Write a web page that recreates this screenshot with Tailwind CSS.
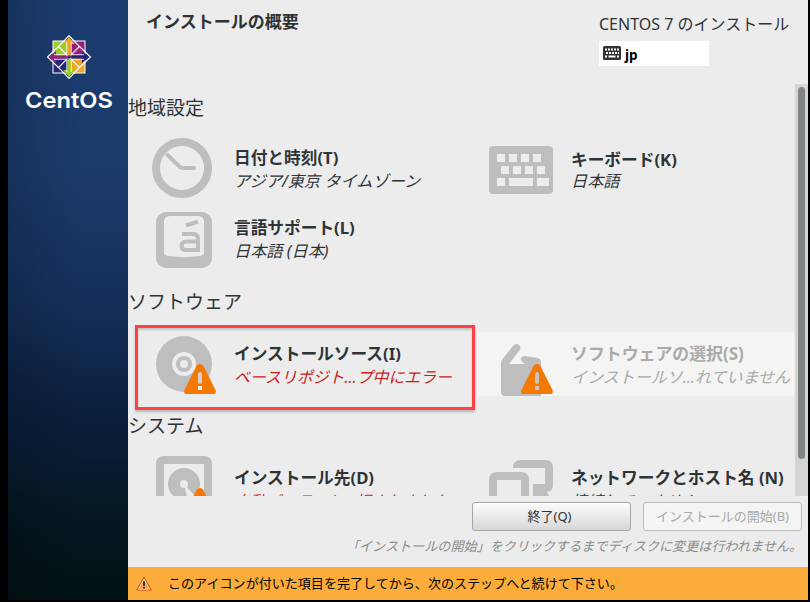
<!DOCTYPE html>
<html lang="ja">
<head>
<meta charset="utf-8">
<title>インストールの概要</title>
<script src="https://cdn.jsdelivr.net/npm/@tailwindcss/browser@4"></script>
</head>
<body class="w-[810px] h-[602px] overflow-hidden bg-black font-['Noto_Sans','Noto_Sans_CJK_JP',sans-serif] text-[#2e3436]">
<svg class="hidden">
  <symbol id="warn" viewBox="0 0 32 30">
    <path d="M16 0c1.500 0 2.700.7 3.400 2L31.500 26c1 2.200.2 4-2.500 4H3c-2.700 0-3.500-1.800-2.500-4L12.600 2C13.300.7 14.500 0 16 0z" fill="#f57900"/>
    <rect x="14" y="8" width="4" height="12" rx="2" fill="var(--top)"/>
    <rect x="14" y="22" width="4" height="4" fill="var(--dot)"/>
  </symbol>
</svg>
<div class="flex w-[800px] h-[600px] ml-2">
  <aside class="w-[120px] shrink-0 pt-[34px] bg-[linear-gradient(90deg,#00000026,transparent_60%),linear-gradient(180deg,#1b3c70_0%,#1b3b6c_28%,#152f5a_50%,#0a1f3c_70%,#04161f_88%,#021315_100%)]">
    <svg class="block ml-[38px]" width="46" height="46" viewBox="0 0 46 46">
      <g stroke="#fff" stroke-width="1">
        <rect x="7" y="7" width="16" height="16" fill="#9ccd2a"/>
        <rect x="23" y="7" width="16" height="16" fill="#932279"/>
        <rect x="7" y="23" width="16" height="16" fill="#262577"/>
        <rect x="23" y="23" width="16" height="16" fill="#efa724"/>
      </g>
      <g stroke="#fff" stroke-width="1.100">
        <path d="M21.500 21.500L12.500 12.500L23 1.500L33.500 12.500L24.500 21.500" fill="none"/>
        <path d="M21.500 24.500L12.500 33.500L23 44.500L33.500 33.500L24.500 24.500" fill="none"/>
        <path d="M12.500 12.500L1.500 23L12.500 33.500M33.500 12.500L44.500 23L33.500 33.500" fill="none"/>
      </g>
      <path d="M21.200 20V10H17L23 3L29 10H24.800V20L23 22Z" fill="#efa724"/>
      <path d="M21.200 26V36H17L23 43L29 36H24.800V26L23 24Z" fill="#9ccd2a"/>
      <path d="M20 21.200H10V17L3 23L10 29V24.800H20L22 23Z" fill="#932279"/>
      <path d="M26 21.200H36V17L43 23L36 29V24.800H26L24 23Z" fill="#262577"/>
      <g fill="none" stroke="#fff" stroke-width=".8"><path d="M20.700 8V20.700H8M25.300 8V20.700H38M20.700 38V25.300H8M25.300 38V25.300H38"/></g>
      <rect x="21.500" y="21.500" width="3" height="3" fill="#262577"/>
    </svg>
    <svg class="block mt-[9px] ml-[14px] overflow-visible" width="94" height="24"><text x="3" y="18.500" font-family="Inter" font-weight="600" font-size="22" textLength="88" lengthAdjust="spacingAndGlyphs" fill="#fff">CentOS</text></svg>
  </aside>
  <main class="flex flex-col w-[680px] bg-[#ececec]">
    <header class="flex justify-between h-[84px] pl-[18px] pr-[17px]">
      <h1 class="mt-[9px] text-[17px] leading-[26px] font-bold">インストールの概要</h1>
      <div class="w-[192px] mt-[12px]">
        <div class="text-[16px] leading-[24px] whitespace-nowrap">CENTOS 7 のインストール</div>
        <div class="flex w-[110px] h-[25px] mt-[5px] pl-1 bg-white text-black">
          <svg class="mt-[5px]" width="18" height="14"><rect width="18" height="14" rx="1.500" fill="#2e3436"/><path d="M2 3.500H16M3 7H16" stroke="#fff" stroke-width="2" stroke-dasharray="2 1"/><path d="M2 10.500H4M5.500 10.500H12.500M14 10.500H16" stroke="#fff" stroke-width="2"/></svg>
          <span class="ml-1 mt-[4px] text-[13.500px] leading-[20px] font-bold">jp</span>
        </div>
      </div>
    </header>
    <div class="flex h-[412px] overflow-hidden">
      <div class="relative w-[667px] h-[440px] shrink-0">
        <h2 class="h-[52px] pt-[10px] text-[19px] leading-[28px]">地域設定</h2>
        <div class="grid grid-cols-[349px_318px] gap-y-2 h-[136px]">
          <div class="flex h-16 pl-6">
            <svg width="64" height="64" class="shrink-0"><circle cx="30" cy="32" r="26" fill="none" stroke="#bebebe" stroke-width="8"/><path d="M15.500 19L27.500 30.500Q29 32 31 32H42" fill="none" stroke="#bebebe" stroke-width="4" stroke-linecap="round" stroke-linejoin="round"/></svg>
            <div class="ml-[18px] pt-[10px] whitespace-nowrap"><div class="text-[16.700px] leading-[24px] font-bold">日付と時刻(T)</div><div class="text-[16.200px] leading-[23px] italic">アジア/東京 タイムゾーン</div></div>
          </div>
          <div class="flex h-16 pl-3">
            <svg width="64" height="64" class="shrink-0"><rect y="10" width="64" height="48" rx="4" fill="#bebebe"/><g fill="#ececec"><path d="M8 18h8v8H8zM20 18h8v8h-8zM32 18h8v8h-8zM44 18h8v8h-8zM12 30h8v8h-8zM24 30h8v8h-8zM36 30h8v8h-8zM48 30h8v8h-8zM8 42h8v8H8zM20 42h24v8H20zM48 42h12v8H48z"/></g></svg>
            <div class="ml-[18px] pt-[12px] whitespace-nowrap"><div class="text-[16.700px] leading-[24px] font-bold">キーボード(K)</div><div class="-mt-0.5 text-[16.200px] leading-[23px] italic">日本語</div></div>
          </div>
          <div class="flex h-16 pl-6">
            <svg width="64" height="64" class="shrink-0"><rect x="4" y="4" width="56" height="56" rx="10" fill="#bebebe"/><path d="M18 8H46Q52 8 52 14V44Q52 48 47 48Q32 50 17 48Q12 48 12 44V14Q12 8 18 8Z" fill="#ececec"/><path d="M34 17.500L46 13.500" stroke="#bebebe" stroke-width="4"/><path d="M30 26H41Q46 26 46 31V42H34Q29.500 42 29.500 38T34 33.500H46" fill="none" stroke="#bebebe" stroke-width="4"/></svg>
            <div class="ml-[18px] pt-[8px] whitespace-nowrap"><div class="text-[16.700px] leading-[24px] font-bold">言語サポート(L)</div><div class="text-[16.200px] leading-[23px] italic">日本語 (日本)</div></div>
          </div>
        </div>
        <h2 class="h-[60px] pt-[16px] text-[19px] leading-[28px]">ソフトウェア</h2>
        <div class="grid grid-cols-[349px_318px] h-16">
          <div class="flex pl-6">
            <svg width="64" height="64" class="shrink-0 [--top:#d0d0cf] [--dot:#ececec]"><circle cx="32" cy="32" r="28" fill="#bebebe"/><circle cx="32" cy="32" r="10" fill="none" stroke="#ececec" stroke-width="4"/><circle cx="32" cy="32" r="4" fill="#ececec"/><use href="#warn" x="32" y="32" width="32" height="30"/></svg>
            <div class="ml-[18px] pt-[10px] whitespace-nowrap"><div class="text-[16.700px] leading-[24px] font-bold">インストールソース(I)</div><div class="text-[15.900px] leading-[23px] italic text-[#cc1a1a]">ベースリポジト...プ中にエラー</div></div>
          </div>
          <div class="flex pl-3 bg-[#f4f4f2] text-[#a9abaa]">
            <svg width="64" height="64" class="shrink-0 [--top:#c6c6c6] [--dot:#c6c6c6]"><path d="M12 31Q12 29 13.500 27L24 14Q27 10.500 30 13Q33 15.500 30 19L20 32H36Q31 29 32 26Q33 24 36 24L49 26Q52 27 52 30V64H16Q12 64 12 60Z" fill="#bebebe"/><use href="#warn" x="32" y="32" width="32" height="30"/></svg>
            <div class="ml-[18px] pt-[10px] whitespace-nowrap"><div class="text-[16.900px] leading-[24px] font-bold">ソフトウェアの選択(S)</div><div class="text-[16px] leading-[23px] italic">インストールソ...れていません</div></div>
          </div>
        </div>
        <h2 class="h-[56px] pt-[16px] text-[19px] leading-[28px]">システム</h2>
        <div class="grid grid-cols-[349px_318px] h-16">
          <div class="flex pl-6">
            <svg width="64" height="64" class="shrink-0 [--top:#d0d0cf] [--dot:#ececec]"><path d="M12 4H52Q60 4 60 12V64H4V12Q4 4 12 4ZM12 12V56H52V12Z" fill="#bebebe" fill-rule="evenodd"/><circle cx="32" cy="32" r="16" fill="#bebebe"/><path d="M32 32L35 45H44Z" fill="#ececec"/><circle cx="32" cy="32" r="4" fill="#ececec"/><use href="#warn" x="32" y="36" width="32" height="30"/></svg>
            <div class="ml-[18px] pt-[14px] whitespace-nowrap"><div class="text-[16.700px] leading-[24px] font-bold">インストール先(D)</div><div class="text-[15.700px] leading-[23px] italic text-[#cc1a1a]">自動パーティシ...択されました</div></div>
          </div>
          <div class="flex pl-3">
            <svg width="64" height="64" class="shrink-0" fill="#bebebe"><path d="M24 16Q24 8 32 8H56Q64 8 64 16V33Q64 39 58 40L60 44H44V32H56V16Z"/><path d="M0 64V28Q0 20 8 20H32Q40 20 40 28V64H32V28H8V64Z"/></svg>
            <div class="ml-[18px] pt-[14px] whitespace-nowrap"><div class="text-[16.700px] leading-[24px] font-bold">ネットワークとホスト名 (N)</div><div class="text-[15.900px] leading-[23px] italic">接続していません</div></div>
          </div>
        </div>
        <div class="absolute left-[7px] top-[241px] w-[340px] h-[85px] border-3 border-[#fc4242] shadow-[0_2px_2px_#8888,inset_0_2px_2px_#8886]"></div>
      </div>
      <div class="w-[13px] pt-[3px] pl-[3px] bg-[#d3d4d4]"><div class="w-[7px] h-[372px] rounded-full bg-[#808584]"></div></div>
    </div>
    <footer class="h-[71px] shrink-0 pt-[6px]">
      <div class="flex justify-end gap-3 pr-[6px]">
        <button class="w-[159px] h-[29px] rounded-[3px] border border-[#a5a5a2] bg-linear-to-b from-[#fcfcfc] to-[#d7d7d7] pr-1 text-[13px]">終了(Q)</button>
        <button class="w-[159px] h-[29px] rounded-[3px] border border-[#bcbdb9] bg-[#f4f4f2] text-[13px] text-[#a8aaa9]">インストールの開始(B)</button>
      </div>
      <p class="mt-[5px] pr-[6px] text-right text-[13.100px] leading-[20px] italic text-[#8a8c8b]">「インストールの開始」をクリックするまでディスクに変更は行われません。</p>
    </footer>
    <div class="flex items-center h-[33px] pl-2 bg-[#fbac3b] text-black text-[13.050px]">
      <svg width="16" height="16"><path d="M8 1.500L15 14H1Z" fill="#f2a561" stroke="#d9661c" stroke-width="1.500" stroke-linejoin="round"/><path d="M8 3L13.500 13.200H2.500Z" fill="none" stroke="#fbd0a5" stroke-width=".9"/><path d="M8 5.500V10M8 11V12.500" stroke="#222" stroke-width="1.700"/></svg>
      <span class="ml-4">このアイコンが付いた項目を完了してから、次のステップへと続けて下さい。</span>
    </div>
  </main>
</div>
</body>
</html>
